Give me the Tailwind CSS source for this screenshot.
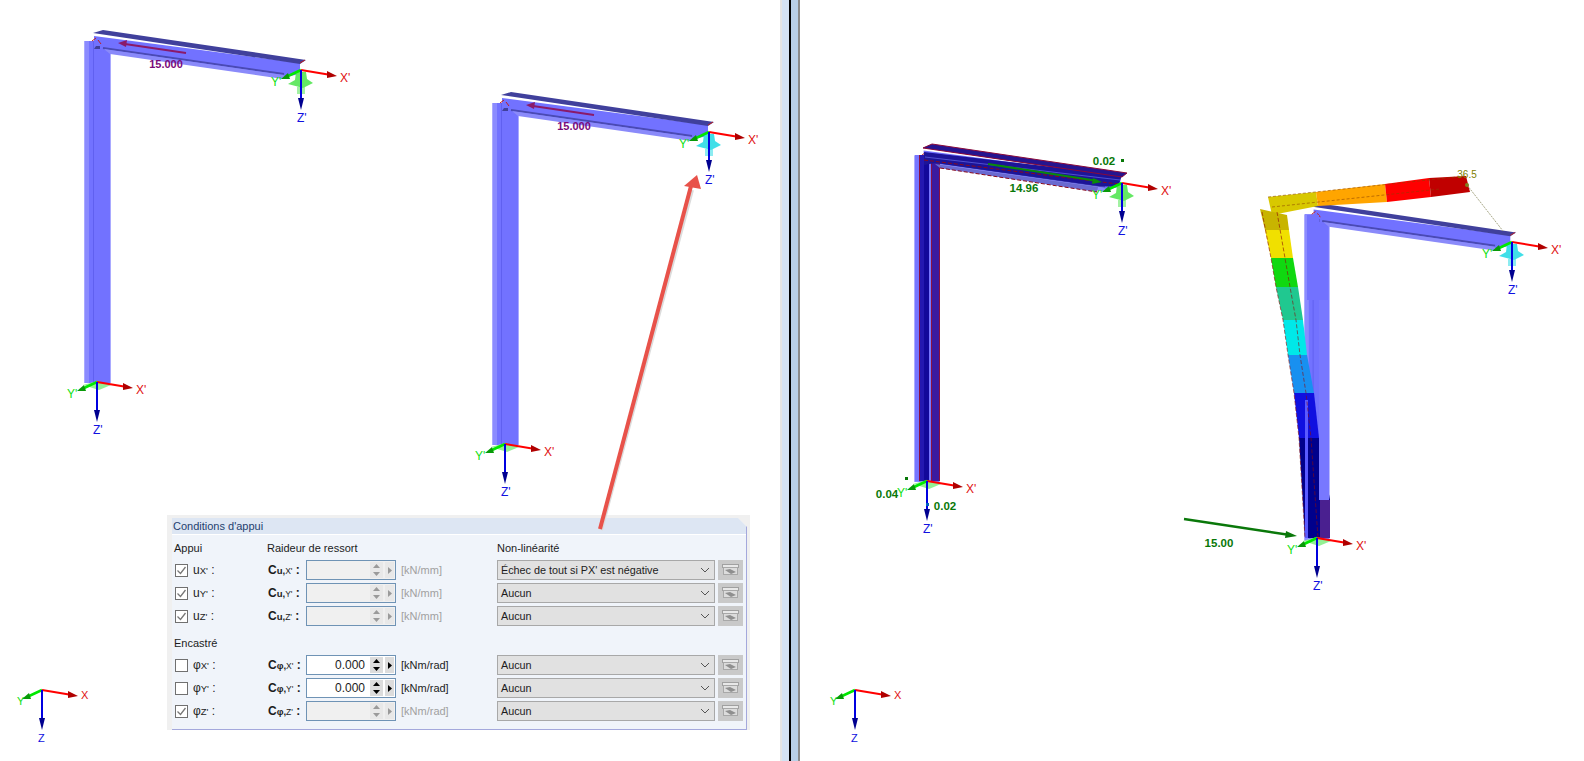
<!DOCTYPE html>
<html lang="fr">
<head>
<meta charset="UTF-8">
<title>Conditions d'appui</title>
<script src="https://cdn.jsdelivr.net/npm/@tailwindcss/browser@4"></script>
</head>
<body class="bg-white overflow-hidden font-['Liberation_Sans',sans-serif]">

<div class="flex w-[1584px] h-[761px]">

    <!-- Left view -->
    <div class="relative w-[780px] h-full bg-white">
        <svg class="w-full h-full" viewBox="0 0 780 761" font-family="Liberation Sans, sans-serif">
            <defs>
                <!-- Undeformed frame, in the coordinates of the top-left drawing -->
                <g id="frame">
                    <rect x="84" y="41" width="27" height="342" fill="#a9a9ff"/>
                    <rect x="85" y="41" width="25" height="342" fill="#7272ff"/>
                    <rect x="85" y="41" width="4" height="342" fill="#8b8bff"/>
                    <rect x="93" y="41" width="1" height="342" fill="#6060f0"/>
                    <polygon points="94,36 300,63 300,74 285,77 110,53 94,50" fill="#7272ff"/>
                    <polygon points="93,33 103,30 306,60 300,64" fill="#40409c"/>
                    <line x1="103" y1="48" x2="284" y2="74" stroke="#4a4ab4" stroke-width="2"/>
                    <polygon points="104,49 284,75 283,79 110,54" fill="#8a8afa"/>
                    <path d="M92 41l4-3M98 40l3 4M300 63l5-3" stroke="#c02020" stroke-width="1" fill="none"/>
                    <polygon points="94,49 100,49 100,46 96,46" fill="#40409c"/>
                </g>
                <!-- Coordinate axes, origin at the node -->
                <g id="axes">
                    <line x1="0" y1="0" x2="30" y2="5" stroke="#ff0000" stroke-width="2"/>
                    <polygon points="26,1 36,6 26,8" fill="#b00000"/>
                    <line x1="0" y1="0" x2="-15" y2="7" stroke="#00e800" stroke-width="2.5"/>
                    <polygon points="-13,3 -20,9 -11,9" fill="#089a08"/>
                    <line x1="0" y1="0" x2="0" y2="30" stroke="#0000e0" stroke-width="2"/>
                    <polygon points="-3,28 3,28 0,40" fill="#000090"/>
                    <text x="39" y="12" font-size="12" fill="#e01010">X'</text>
                    <text x="-30" y="16" font-size="12" fill="#10e010">Y'</text>
                    <text x="-4" y="52" font-size="12" fill="#1010e0">Z'</text>
                </g>
                <g id="axes-plain">
                    <line x1="0" y1="0" x2="30" y2="5" stroke="#ff0000" stroke-width="2"/>
                    <polygon points="26,1 36,6 26,8" fill="#b00000"/>
                    <line x1="0" y1="0" x2="-15" y2="7" stroke="#00e800" stroke-width="2.5"/>
                    <polygon points="-13,3 -20,9 -11,9" fill="#089a08"/>
                    <line x1="0" y1="0" x2="0" y2="30" stroke="#0000e0" stroke-width="2"/>
                    <polygon points="-3,28 3,28 0,40" fill="#000090"/>
                    <text x="39" y="9" font-size="11" fill="#e01010">X</text>
                    <text x="-25" y="15" font-size="11" fill="#10e010">Y</text>
                    <text x="-4" y="52" font-size="11" fill="#1010e0">Z</text>
                </g>
                <!-- Nodal support seen from above, colour comes from the use -->
                <g id="support">
                    <polygon points="-5,2 5,2 6,9 12,13 2,18 -13,14 -6,10" fill="currentColor"/>
                    <rect x="-4" y="17" width="8" height="7" fill="currentColor" opacity=".6"/>
                </g>
                <polygon id="base" points="-14,3 0,-1 14,3 2,8" fill="#94f094"/>
                <g id="load">
                    <line x1="186" y1="53" x2="125" y2="44" stroke="#8a1a6a" stroke-width="2"/>
                    <polygon points="118,43 127,40 126,47" fill="#8a1a6a"/>
                    <text x="166" y="68" font-size="11" font-weight="700" text-anchor="middle" fill="#7a0a7a">15.000</text>
                </g>
            </defs>

            <!-- Top left structure -->
            <use href="#frame"/>
            <use href="#base" x="97" y="382"/>
            <use href="#support" x="301" y="70" color="#64e864"/>
            <use href="#load"/>
            <use href="#axes" x="301" y="70"/>
            <use href="#axes" x="97" y="382"/>

            <!-- Second structure -->
            <g transform="translate(408 62)">
                <use href="#frame"/>
                <use href="#base" x="97" y="382"/>
                <use href="#support" x="301" y="70" color="#40dfe8"/>
                <use href="#load"/>
                <use href="#axes" x="301" y="70"/>
                <use href="#axes" x="97" y="382"/>
            </g>

            <use href="#axes-plain" x="42" y="690"/>
        </svg>

        <!-- Dialog extract -->
        <div class="absolute left-[167px] top-[515px] w-[583px] h-[215px] pl-[5px] pt-[3px] pr-[3px] bg-[#f0f0f0] text-[11px] text-[#1c1c1c]">
            <div class="h-[212px] bg-[#f0f4fa] border-r border-b border-[#a4a8dc] [clip-path:polygon(0_0,566px_0,100%_9px,100%_100%,0_100%)]">
                <div class="h-[17px] flex items-center pl-[1px] bg-[#dde6f3] border-b border-white text-[#1f3f6f]">Conditions d'appui</div>
                <div class="pl-[2px]">
                    <div class="h-[25px] pt-[2px] flex items-center relative">
                        <span class="w-[93px]">Appui</span>
                        <span class="w-[230px]">Raideur de ressort</span>
                        <span>Non-linéarité</span>
                    </div>
                    <div id="rowsA" class="flex flex-col gap-[3px]"></div>
                    <div class="h-[29px] pt-[6px] flex items-center">Encastré</div>
                    <div id="rowsB" class="flex flex-col gap-[3px]"></div>
                </div>
            </div>
        </div>

        <!-- Red callout arrow -->
        <svg class="absolute left-0 top-0 w-full h-full pointer-events-none" viewBox="0 0 780 761">
            <line x1="601" y1="530" x2="692" y2="190" stroke="#dcdcdc" stroke-width="4"/>
            <line x1="600" y1="529" x2="691" y2="186" stroke="#e8524a" stroke-width="4"/>
            <polygon points="697,175 701,189 684,186" fill="#e8524a"/>
        </svg>
    </div>

    <!-- Splitter -->
    <div class="w-[2px] h-full bg-[#e4e4e4]"></div>
    <div class="w-[7px] h-full bg-[#d4e2f3]"></div>
    <div class="w-[2px] h-full bg-black"></div>
    <div class="w-[7px] h-full bg-[#b9d0e8]"></div>
    <div class="w-[2px] h-full bg-[#8c8c8c]"></div>

    <!-- Right view, x = 800 on the page -->
    <div class="w-[784px] h-full bg-white">
        <svg class="w-full h-full" viewBox="800 0 784 761" font-family="Liberation Sans, sans-serif">
            <!-- Results on the left structure -->
            <g transform="translate(915 183) scale(.955) translate(-85 -70)">
                <use href="#frame"/>
            </g>
            <rect x="915" y="155" width="25" height="326" fill="#7676ff"/>
            <rect x="920" y="155" width="4" height="326" fill="#2418b0"/>
            <rect x="924" y="155" width="5" height="326" fill="#12089a"/>
            <rect x="932" y="155" width="8" height="326" fill="#3a1aa0"/>
            <rect x="919" y="155" width="1" height="326" fill="#8b1040"/>
            <rect x="931" y="155" width="1" height="326" fill="#8b1040"/>
            <rect x="939" y="155" width="1" height="326" fill="#8b1040"/>
            <polygon points="924,152 1122,175 1118,187 1098,186 935,163 924,165" fill="#1c1498"/>
            <polygon points="923,148 932,144 1127,173 1122,177" fill="#25148f" stroke="#8b0a3a" stroke-width="1"/>
            <line x1="925" y1="157" x2="1120" y2="180" stroke="#5050d0" stroke-width="1"/>
            <polygon points="935,164 1098,187 1097,192 940,168" fill="#6a6ad0"/>
            <path d="M924 160L1118 184M940 168L1097 192" stroke="#8b0a1a" stroke-width="1" stroke-dasharray="4 2" fill="none"/>
            <line x1="988" y1="164" x2="1098" y2="181" stroke="#0a8a0a" stroke-width="2"/>
            <polygon points="1102,182 1093,178 1092,184" fill="#0a8a0a"/>
            <use href="#base" x="927" y="481"/>
            <use href="#support" x="1122" y="183" color="#64e864"/>
            <use href="#axes" x="1122" y="183"/>
            <use href="#axes" x="927" y="481"/>
            <g font-size="11.5" font-weight="700" fill="#087808" text-anchor="middle">
                <text x="1024" y="192">14.96</text>
                <text x="1104" y="165">0.02</text>
                <text x="887" y="498">0.04</text>
                <text x="945" y="510">0.02</text>
            </g>
            <rect x="1121" y="159" width="3" height="3" fill="#087808"/>
            <rect x="905" y="477" width="3" height="3" fill="#087808"/>
            <rect x="926" y="503" width="3" height="3" fill="#0060c0"/>

            <!-- Right structure with its deformed shape -->
            <g transform="translate(1305 242) scale(.955) translate(-85 -70)">
                <use href="#frame"/>
            </g>
            <polygon points="1268,197 1316,192 1318,206 1272,215" fill="#d8c800"/>
            <polygon points="1316,192 1385,184 1387,202 1318,206" fill="#ffa500"/>
            <polygon points="1385,184 1429,178 1431,197 1387,202" fill="#ff0000"/>
            <polygon points="1429,178 1466,176 1470,192 1431,197" fill="#c00000"/>
            <path d="M1268 197L1466 176M1272 207L1440 189" stroke="#8b4000" stroke-width=".8" stroke-dasharray="3 2" opacity=".7" fill="none"/>
            <polygon points="1260,209 1287,215 1289,230 1265,230" fill="#c8b400"/>
            <polygon points="1265,230 1289,230 1293,258 1271,258" fill="#f0e000"/>
            <polygon points="1271,258 1293,258 1298,287 1276,287" fill="#10d810"/>
            <polygon points="1276,287 1298,287 1303,320 1283,320" fill="#20c890"/>
            <polygon points="1283,320 1303,320 1307,355 1288,355" fill="#00e8e8"/>
            <polygon points="1288,355 1307,355 1314,393 1294,393" fill="#1890f0"/>
            <polygon points="1294,393 1314,393 1319,438 1299,438" fill="#1010e0"/>
            <polygon points="1299,438 1319,438 1330,500 1330,538 1305,538" fill="#00008c"/>
            <rect x="1320" y="500" width="10" height="38" fill="#4a2090"/>
            <rect x="1305" y="400" width="3" height="138" fill="#5a5aff"/>
            <rect x="1319" y="300" width="10" height="200" fill="#7878ff"/>
            <polygon points="1307,215 1319,215 1319,300 1307,300" fill="#7272ff"/>
            <path d="M1262 212L1271 258L1276 287L1283 320L1288 355L1294 393L1299 438L1305 538M1277 212L1285 258L1290 287L1296 320L1300 355L1306 393L1311 438L1318 538" stroke="#8b0a0a" stroke-width=".8" stroke-dasharray="4 2" opacity=".75" fill="none"/>
            <line x1="1467" y1="185" x2="1503" y2="231" stroke="#a8a888" stroke-width="1" stroke-dasharray="2 1"/>
            <circle cx="1467" cy="185" r="2" fill="#808020"/>
            <text x="1467" y="178" font-size="10" text-anchor="middle" fill="#808000">36.5</text>
            <line x1="1184" y1="519" x2="1290" y2="535" stroke="#0a780a" stroke-width="2.5"/>
            <polygon points="1297,536 1286,531 1285,538" fill="#0a780a"/>
            <text x="1219" y="547" font-size="11.5" font-weight="700" text-anchor="middle" fill="#087808">15.00</text>
            <use href="#base" x="1317" y="538"/>
            <use href="#support" x="1512" y="242" color="#40dfe8"/>
            <use href="#axes" x="1512" y="242"/>
            <use href="#axes" x="1317" y="538"/>

            <use href="#axes-plain" x="855" y="690"/>
        </svg>
    </div>
</div>

<script>
    const rowsA = [
        {sub: 'u', axis: "X'", checked: true, on: false, unit: '[kN/mm]', option: "Échec de tout si PX' est négative"},
        {sub: 'u', axis: "Y'", checked: true, on: false, unit: '[kN/mm]', option: 'Aucun'},
        {sub: 'u', axis: "Z'", checked: true, on: false, unit: '[kN/mm]', option: 'Aucun'}
    ];
    const rowsB = [
        {sub: 'φ', axis: "X'", checked: false, on: true, unit: '[kNm/rad]', option: 'Aucun'},
        {sub: 'φ', axis: "Y'", checked: false, on: true, unit: '[kNm/rad]', option: 'Aucun'},
        {sub: 'φ', axis: "Z'", checked: true, on: false, unit: '[kNm/rad]', option: 'Aucun'}
    ];

    function renderRow(r) {
        const arrow = r.on ? '#000' : '#9a9a9a';
        return `
        <div class="h-[20px] grid grid-cols-[94px_38px_90px_101px_218px_28px] items-center">
            <div class="flex items-center">
                <span class="w-[13px] h-[13px] ml-[1px] border border-[#707070] bg-white flex items-center justify-center">
                    ${r.checked ? '<svg width="11" height="11" viewBox="0 0 11 11"><path d="M1.5 5.5L4.5 8.5L9.5 2" fill="none" stroke="#777" stroke-width="1.3"/></svg>' : ''}
                </span>
                <span class="ml-[5px] text-[12px]">${r.sub}<span class="text-[9.5px]">${r.axis}</span> :</span>
            </div>
            <div class="font-bold text-[12px] whitespace-nowrap">C<span class="text-[9.5px]">${r.sub},</span><span class="text-[8.5px] font-normal">${r.axis}</span> :</div>
            <div class="h-full flex items-center justify-end border border-[#6f93b5] ${r.on ? 'bg-white' : 'bg-[#f0f0f0]'}">
                <span class="mr-[5px] text-[12px]">${r.on ? '0.000' : ''}</span>
                <span class="w-[13px] h-[16px] mr-[2px] flex flex-col justify-between ${r.on ? 'bg-[#dcdcdc]' : 'bg-[#e8e8e8]'}">
                    <svg width="13" height="7" viewBox="0 0 13 7"><polygon points="3,6 10,6 6.5,2" fill="${arrow}"/></svg>
                    <svg width="13" height="7" viewBox="0 0 13 7"><polygon points="3,1 10,1 6.5,5" fill="${arrow}"/></svg>
                </span>
                <span class="w-[9px] h-[16px] mr-[1px] flex items-center justify-center ${r.on ? 'bg-[#dcdcdc]' : 'bg-[#e8e8e8]'}">
                    <svg width="5" height="7" viewBox="0 0 5 7"><polygon points="1,0 5,3.5 1,7" fill="${arrow}"/></svg>
                </span>
            </div>
            <div class="pl-[5px] ${r.on ? 'text-[#1c1c1c]' : 'text-[#a0a0a0]'}">${r.unit}</div>
            <div class="h-full flex items-center justify-between px-[3px] bg-[#e1e1e1] border border-[#a8a8a8] text-[10.8px]">
                <span>${r.option}</span>
                <svg class="mr-[1px]" width="10" height="6" viewBox="0 0 10 6"><path d="M1 1L5 5L9 1" fill="none" stroke="#555" stroke-width="1"/></svg>
            </div>
            <div class="h-full ml-[3px] w-[25px] bg-[#c9c9c9] flex items-center justify-center">
                <svg width="17" height="12" viewBox="0 0 17 12">
                    <rect x="0.5" y="0.5" width="16" height="3" fill="#e8e8e8" stroke="#a0a0a0"/>
                    <rect x="1.5" y="3.5" width="14" height="7" fill="#dcdcdc" stroke="#a8a8a8"/>
                    <path d="M3 6L8 5L14 8L9 10Z" fill="#8f8f8f"/>
                </svg>
            </div>
        </div>`;
    }

    document.getElementById('rowsA').innerHTML = rowsA.map(renderRow).join('');
    document.getElementById('rowsB').innerHTML = rowsB.map(renderRow).join('');
</script>
</body>
</html>
